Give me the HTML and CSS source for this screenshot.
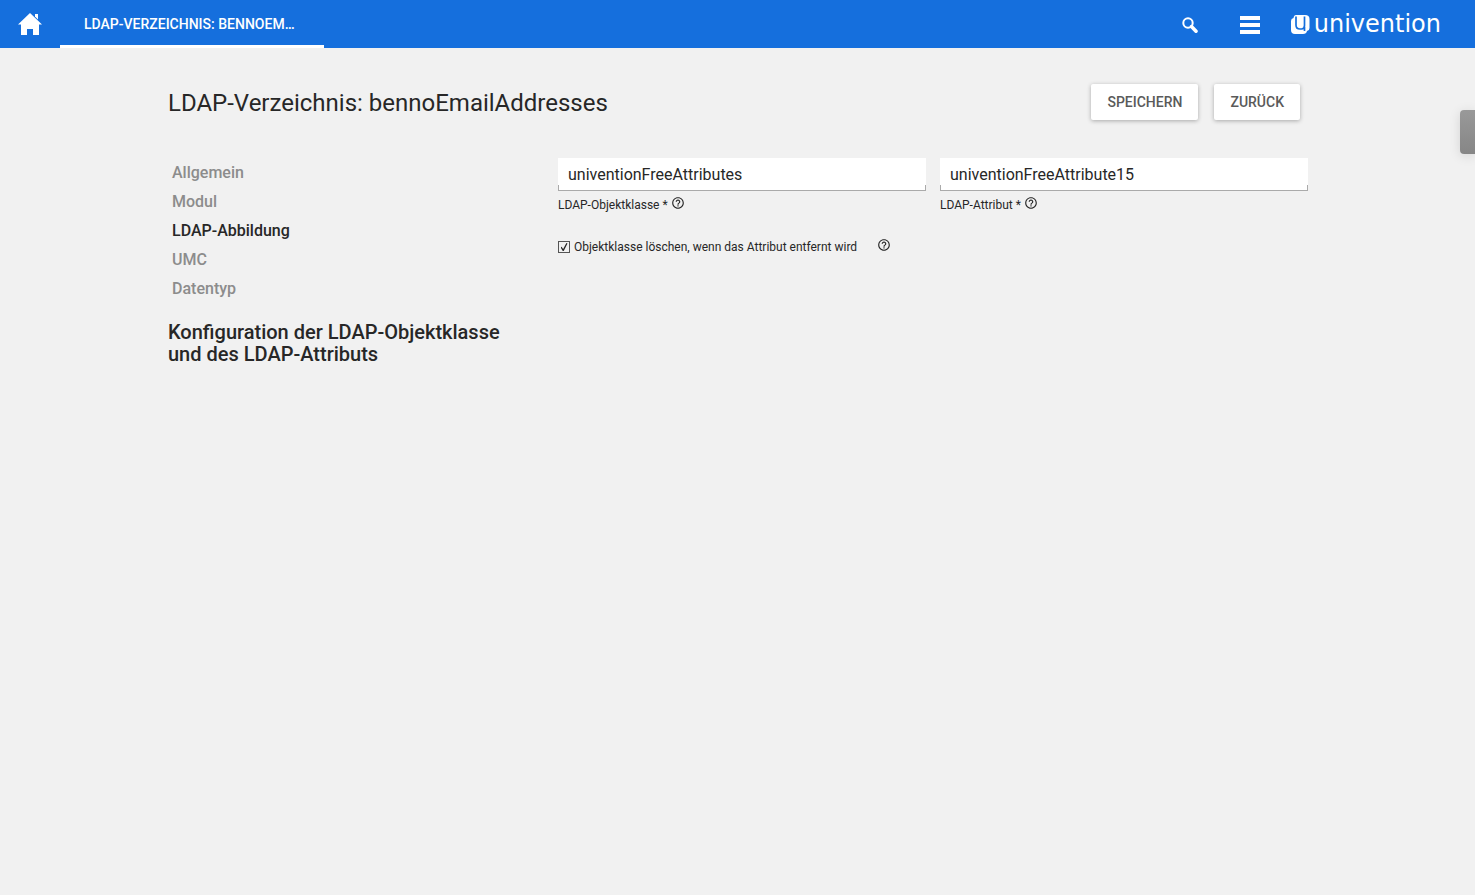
FILE: index.html
```html
<!DOCTYPE html>
<html lang="de">
<head>
<meta charset="utf-8">
<title>LDAP-Verzeichnis: bennoEmailAddresses</title>
<link rel="stylesheet" href="styles.css">
</head>
<body>
<svg class="defs" aria-hidden="true">
  <symbol id="help" viewBox="0 0 24 24"><path d="M11 18h2v-2h-2v2zm1-16C6.480 2 2 6.480 2 12s4.480 10 10 10 10-4.480 10-10S17.520 2 12 2zm0 18c-4.410 0-8-3.590-8-8s3.590-8 8-8 8 3.590 8 8-3.590 8-8 8zm0-14c-2.210 0-4 1.790-4 4h2c0-1.100.9-2 2-2s2 .9 2 2c0 2-3 1.750-3 5h2c0-2.250 3-2.500 3-5 0-2.210-1.790-4-4-4z"/></symbol>
</svg>
<header class="topbar">
  <button class="topbar-button" type="button" aria-label="Startseite">
    <svg width="24" height="24" viewBox="0 0 24 24" fill="#fff"><path d="M12 1 0 12.500h3V23h6v-6h6v6h6V12.500h3z"/><path d="M17 2h3v5.500l-3-3z"/></svg>
  </button>
  <button class="tab" type="button">LDAP-Verzeichnis: bennoEm…</button>
  <div class="topbar-tools">
    <button class="topbar-button" type="button" aria-label="Suche">
      <svg width="16" height="18" viewBox="0 0 16 18" fill="none" stroke="#fff"><circle cx="6" cy="7" r="4.700" stroke-width="2"/><path d="m9.500 10.500 4.500 4.700" stroke-width="3.500" stroke-linecap="round"/></svg>
    </button>
    <button class="topbar-button" type="button" aria-label="Menü">
      <svg width="20" height="18" viewBox="0 0 20 18" fill="#fff"><path d="M0 0h20v4H0zM0 7h20v4H0zM0 14h20v4H0z"/></svg>
    </button>
    <div class="brand">
      <svg width="19" height="19" viewBox="0 0 19 19"><path d="M5 0h9q4.500 0 4.500 4v9q0 2.500-2.500 3-.5 3-4 3H4q-4 0-4-4V6q0-2.500 2.500-3Q3 0 5 0z" fill="#fff"/><path d="M5 1.500v8.500q0 4 4 4h1.500q3 0 3-3.500V1.500M13.500 12v4" fill="none" stroke="#156fdd" stroke-width="1.700"/></svg>
      <span>univention</span>
    </div>
  </div>
</header>
<main class="page">
  <div class="page-head">
    <h1>LDAP-Verzeichnis: bennoEmailAddresses</h1>
    <div class="actions">
      <button class="action" type="button">Speichern</button>
      <button class="action" type="button">Zurück</button>
    </div>
  </div>
  <div class="columns">
    <aside>
      <nav class="sections">
        <a href="#allgemein">Allgemein</a>
        <a href="#modul">Modul</a>
        <a class="current" href="#ldap">LDAP-Abbildung</a>
        <a href="#umc">UMC</a>
        <a href="#datentyp">Datentyp</a>
      </nav>
      <h2>Konfiguration der LDAP-Objektklasse und des LDAP-Attributs</h2>
    </aside>
    <form class="fields">
      <div class="field">
        <div class="control"><input id="objectclass" type="text" value="univentionFreeAttributes"></div>
        <div class="caption"><label for="objectclass">LDAP-Objektklasse *</label><svg class="help"><use href="#help"/></svg></div>
      </div>
      <div class="field">
        <div class="control"><input id="attribute" type="text" value="univentionFreeAttribute15"></div>
        <div class="caption"><label for="attribute">LDAP-Attribut *</label><svg class="help"><use href="#help"/></svg></div>
      </div>
      <div class="check">
        <input id="remove" type="checkbox" checked>
        <label for="remove">Objektklasse löschen, wenn das Attribut entfernt wird</label>
        <svg class="help"><use href="#help"/></svg>
      </div>
    </form>
  </div>
</main>
<div class="side-handle"></div>
</body>
</html>
```
FILE: styles.css
```css
* { box-sizing: border-box; }
body {
  margin: 0;
  background: #f1f1f1;
  color: #272727;
  font-family: Roboto, "Liberation Sans", sans-serif;
}
button, input { font: inherit; color: inherit; }
button { border: 0; padding: 0; cursor: pointer; }
.defs { display: none; }

.topbar {
  display: flex;
  height: 48px;
  background: #156fdd;
  color: #fff;
}
.topbar-button {
  display: flex;
  align-items: center;
  justify-content: center;
  width: 60px;
  background: none;
}
.topbar-tools .topbar-button { padding-top: 2px; }
.tab {
  width: 264px;
  padding: 3px 24px 0;
  border-bottom: 3px solid #fff;
  background: none;
  font-size: 14px;
  font-weight: 500;
  text-align: left;
  text-transform: uppercase;
  white-space: nowrap;
}
.topbar-tools { display: flex; margin-left: auto; }
.brand {
  display: flex;
  align-items: center;
  gap: 4px;
  padding: 0 34px 0 11px;
  font-family: "DejaVu Sans", sans-serif;
  font-size: 24px;
  line-height: 48px;
}

.page { max-width: 1141px; margin: 0 auto; padding: 36px 0 0 1px; }
.page-head {
  display: flex;
  align-items: center;
  justify-content: space-between;
  padding-right: 8px;
  margin-bottom: 38px;
}
h1 { margin: 0; padding-top: 2px; font-size: 24px; line-height: 34px; font-weight: 400; }
.actions { display: flex; gap: 16px; }
.action {
  height: 36px;
  padding: 0 16px;
  border-radius: 2px;
  background: #fff;
  box-shadow: 0 1px 4px rgba(0, 0, 0, .3);
  color: #5a5a5a;
  font-size: 14px;
  font-weight: 500;
  text-transform: uppercase;
}

.columns { display: grid; grid-template-columns: 376fr 750fr; gap: 14px; }
.sections { display: flex; flex-direction: column; padding-left: 4px; }
.sections a {
  color: #8c8c8c;
  font-size: 16px;
  font-weight: 500;
  line-height: 29px;
  text-decoration: none;
}
.sections .current { color: #272727; }
h2 {
  max-width: 360px;
  margin: 18px 0 0;
  font-size: 20px;
  line-height: 22px;
  font-weight: 500;
}
.fields {
  display: grid;
  grid-template-columns: 1fr 1fr;
  align-content: start;
  column-gap: 14px;
  row-gap: 24px;
  font-size: 12px;
}
.control {
  padding: 0 1px 1px;
  background: linear-gradient(#fff, #fff) 0 0 / 100% 27px no-repeat, #aaa;
}
.control input {
  display: block;
  width: 100%;
  height: 32px;
  padding: 0 9px;
  border: 0;
  outline: 0;
  background: #fff;
  font-size: 16px;
}
.caption { display: flex; align-items: center; gap: 4px; padding-top: 5px; line-height: 18px; }
.help { width: 14px; height: 14px; margin: 0 -1px 4px; fill: currentColor; }
.check { grid-column: 1 / -1; display: flex; align-items: center; line-height: 14px; }
.check input {
  appearance: none;
  width: 12px;
  height: 12px;
  margin: 0 4px 0 0;
  border: 1px solid #555;
  background: #f1f1f1;
  display: grid;
  place-items: center;
}
.check input:checked::before {
  content: "";
  width: 7px;
  height: 8px;
  background: #272727;
  clip-path: polygon(0 52%, 14% 46%, 38% 76%, 84% 0, 100% 6%, 46% 100%, 32% 100%);
}
.check .help { margin-left: 20px; }

.side-handle {
  position: fixed;
  top: 110px;
  right: 0;
  width: 15px;
  height: 44px;
  border-radius: 4px 0 0 4px;
  background: linear-gradient(#999, #868686);
  box-shadow: 0 2px 12px rgba(0, 0, 0, .12);
}
```
